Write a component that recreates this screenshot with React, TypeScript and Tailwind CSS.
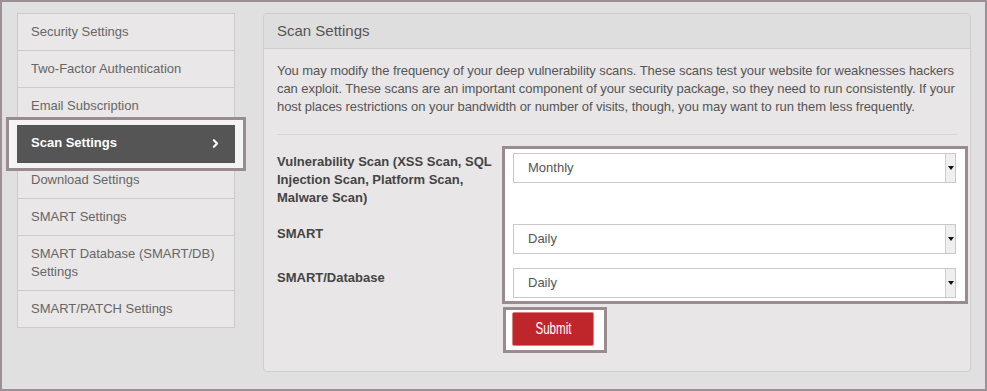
import React from 'react';
import { ChevronRight } from 'lucide-react';

const NAV = [
    'Security Settings',
    'Two-Factor Authentication',
    'Email Subscription',
    'Scan Settings',
    'Download Settings',
    'SMART Settings',
    'SMART Database (SMART/DB) Settings',
    'SMART/PATCH Settings',
];

const ACTIVE = 'Scan Settings';

const FakeSelect = ({ value, className = '' }: { value: string; className?: string }) => (
    <div className={`flex h-[30px] items-stretch border border-[#c9c8c9] bg-white ${className}`}>
        <div className="flex flex-1 items-center pl-[14px] text-[13px] text-[#555]">{value}</div>
        <div className="flex w-[10px] items-start justify-center border-l border-[#cfcfcf] bg-[#efefef] pt-[12px]">
            <svg width="6" height="4" viewBox="0 0 6 4">
                <path d="M0 0 L6 0 L3 4 Z" fill="#111" />
            </svg>
        </div>
    </div>
);

const App = () => {
    return (
        <div className="box-border h-[391px] w-[987px] overflow-hidden border-2 border-[#9c8f96] bg-[#e1e0e1] font-['Liberation_Sans',Arial,sans-serif]">
            <div className="flex pl-[15px] pt-[11px]">
                {/* Sidebar */}
                <div className="w-[218px] shrink-0">
                    <div className="border-t border-[#cccbcc]">
                        {NAV.map((item) =>
                            item === ACTIVE ? (
                                <div key={item} className="relative z-10 -mb-[1px]">
                                    <span className="absolute -bottom-[8px] -left-[11px] -right-[11px] -top-[8px] border-[3px] border-[#9a8b91] bg-[#f4f4f4]" />
                                    <div className="relative flex items-center justify-between bg-[#555555] pb-[11px] pl-[14px] pr-[13px] pt-[9px] text-[13px] font-bold leading-[18px] text-white">
                                        <span>{item}</span>
                                        <ChevronRight size={13} strokeWidth={4} />
                                    </div>
                                </div>
                            ) : (
                                <div
                                    key={item}
                                    className="border-x border-b border-[#cccbcc] bg-[#e9e7e8] py-[9px] pl-[13px] pr-[10px] text-[13px] leading-[18px] text-[#666]"
                                >
                                    {item}
                                </div>
                            )
                        )}
                    </div>
                </div>

                {/* Main panel */}
                <div className="ml-[28px] w-[708px] shrink-0 rounded-[4px] border border-[#cfcecf] bg-[#e8e6e7]">
                    <div className="rounded-t-[4px] border-b border-[#cfcecf] bg-[#dfdedf] py-[8px] pl-[13px] text-[15px] leading-[18px] text-[#555]">
                        Scan Settings
                    </div>
                    <div className="px-[13px] pb-[18px] pt-[13px]">
                        <p className="mr-[-4px] text-[13px] leading-[18px] tracking-[-0.07px] text-[#555]">
                            You may modify the frequency of your deep vulnerability scans. These scans test your website for weaknesses hackers can exploit. These scans are an important component of your security package, so they need to run consistently. If your host places restrictions on your bandwidth or number of visits, though, you may want to run them less frequently.
                        </p>
                        <div className="mt-[18px] border-t border-[#d7d6d7]" />

                        <div className="flex">
                            <div className="w-[225px] shrink-0 pr-[10px] text-[13px] font-bold leading-[18px] text-[#444]">
                                <div className="mt-[18px]">Vulnerability Scan (XSS Scan, SQL Injection Scan, Platform Scan, Malware Scan)</div>
                                <div className="mt-[18px]">SMART</div>
                                <div className="mt-[26px]">SMART/Database</div>
                            </div>
                            <div className="mr-[-11px] w-[466px] shrink-0">
                                <div className="mt-[11px] border-[3px] border-[#9a8b91] bg-white pb-[3px] pl-[8px] pr-[9px] pt-[4px]">
                                    <FakeSelect value="Monthly" />
                                    <FakeSelect value="Daily" className="mt-[41px]" />
                                    <FakeSelect value="Daily" className="mt-[14px]" />
                                </div>
                                <div className="ml-[1px] mt-[3px] w-[104px] border-[3px] border-[#9a8b91] bg-white pb-[4px] pl-[6px] pr-[10px] pt-[2px]">
                                    <button className="flex h-[34px] w-[82px] items-center justify-center rounded-[2px] border border-[#e27b7b] bg-[#bf262b] text-[17px] text-white">
                                        <span className="inline-block scale-x-[0.68]">Submit</span>
                                    </button>
                                </div>
                            </div>
                        </div>
                    </div>
                </div>
            </div>
        </div>
    );
};

export default App;
